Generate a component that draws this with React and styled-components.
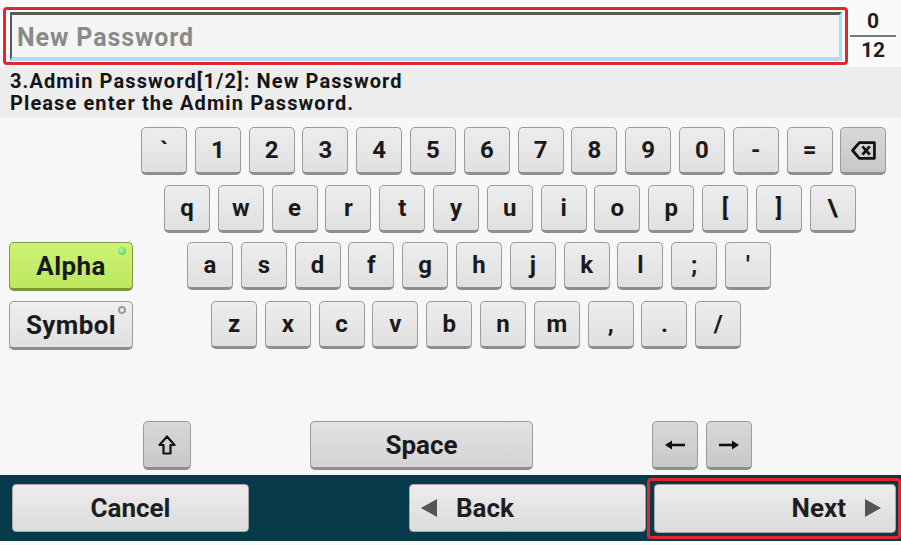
import React from 'react'
import styled, { createGlobalStyle } from 'styled-components'

const Global = createGlobalStyle`
  html, body { margin: 0; padding: 0; background: #fafafa; }
`

const rows = [
  { indent: 8, keys: ['`', '1', '2', '3', '4', '5', '6', '7', '8', '9', '0', '-', '=', 'BS'] },
  { indent: 31, keys: ['q', 'w', 'e', 'r', 't', 'y', 'u', 'i', 'o', 'p', '[', ']', '\\'] },
  { indent: 54, mode: 'Alpha', active: true, keys: ['a', 's', 'd', 'f', 'g', 'h', 'j', 'k', 'l', ';', "'"] },
  { indent: 78, mode: 'Symbol', keys: ['z', 'x', 'c', 'v', 'b', 'n', 'm', ',', '.', '/'] },
]

const BackspaceIcon = () => (
  <svg width="25" height="19" viewBox="0 0 24 18">
    <path d="M8 1.5 H22.5 V16.5 H8 L1.5 9 Z" fill="none" stroke="#111" strokeWidth="2.6" strokeLinejoin="round" />
    <path d="M11 5 L18 13 M18 5 L11 13" stroke="#111" strokeWidth="2.6" />
  </svg>
)

const ShiftIcon = () => (
  <svg width="18" height="20" viewBox="0 0 18 20">
    <path d="M9 1.5 L16.5 10 H12.5 V18.5 H5.5 V10 H1.5 Z" fill="none" stroke="#111" strokeWidth="2.2" strokeLinejoin="round" />
  </svg>
)

const ArrowIcon = ({ dir }) => (
  <svg width="22" height="10" viewBox="0 0 22 10" style={{ transform: dir === 'right' ? 'scaleX(-1)' : 'none' }}>
    <path d="M1 5 L8 0.5 V9.5 Z" fill="#111" />
    <path d="M6 5 H21" stroke="#111" strokeWidth="2.6" />
  </svg>
)

const Triangle = ({ dir }) => (
  <svg width="18" height="20" viewBox="0 0 18 20">
    {dir === 'left'
      ? <path d="M1 10 L17 1 V19 Z" fill="#555" />
      : <path d="M17 10 L1 1 V19 Z" fill="#555" />}
  </svg>
)

const App = () => {
  return (
    <>
      <Global />
      <Page>
        <Header>
          <FieldFrame>
            <Field>New Password</Field>
          </FieldFrame>
          <Counter>
            <span>0</span>
            <CounterLine />
            <span>12</span>
          </Counter>
        </Header>
        <Message>
          <div>3.Admin Password[1/2]: New Password</div>
          <div>Please enter the Admin Password.</div>
        </Message>
        <Keyboard>
          {rows.map((row, i) => (
            <KeyRow key={i}>
              <Side>
                {row.mode && (
                  <ModeButton $active={row.active}>
                    {row.mode}
                    <ModeDot $active={row.active} />
                  </ModeButton>
                )}
              </Side>
              <Keys $indent={row.indent}>
                {row.keys.map(k => (
                  <Key key={k} $dark={k === 'BS'}>
                    {k === 'BS' ? <BackspaceIcon /> : k}
                  </Key>
                ))}
              </Keys>
            </KeyRow>
          ))}
          <BottomKeys>
            <Key $dark><ShiftIcon /></Key>
            <SpaceKey>Space</SpaceKey>
            <ArrowKeys>
              <Key $dark><ArrowIcon dir="left" /></Key>
              <Key $dark><ArrowIcon dir="right" /></Key>
            </ArrowKeys>
          </BottomKeys>
        </Keyboard>
        <Bar>
          <BarButton $align="center">Cancel</BarButton>
          <Spacer />
          <BarButton $align="flex-start" $pad="0 0 0 10px">
            <Triangle dir="left" />
            <span>Back</span>
          </BarButton>
          <NextFrame>
            <BarButton $align="flex-end" $pad="0 13px 0 0" $full>
              <span>Next</span>
              <Triangle dir="right" />
            </BarButton>
          </NextFrame>
        </Bar>
        <BottomStrip />
      </Page>
    </>
  )
}

export default App

const Page = styled.div`
  width: 901px;
  height: 545px;
  display: flex;
  flex-direction: column;
  background: #f7f7f7;
  font-family: Roboto, "Liberation Sans", sans-serif;
  font-weight: 700;
  color: #1e1e1e;
  overflow: hidden;
`

const Header = styled.div`
  height: 67px;
  box-sizing: border-box;
  display: flex;
  align-items: flex-start;
  padding: 7px 5px 0 3px;
  gap: 2px;
  background: #fafafa;
`

const FieldFrame = styled.div`
  flex: 1;
  height: 58px;
  box-sizing: border-box;
  border: 3px solid #e2262b;
  border-radius: 4px;
  padding: 2px 3px 1px 4px;
`

const Field = styled.div`
  height: 100%;
  box-sizing: border-box;
  display: flex;
  align-items: center;
  padding: 3px 0 0 5px;
  background: #f5f5f5;
  border-top: 3px solid #595959;
  border-left: 2px solid #595959;
  border-right: 3px solid #acdff3;
  border-bottom: 4px solid #acdff3;
  font-size: 25px;
  letter-spacing: 0.9px;
  color: #8a8a8a;
`

const Counter = styled.div`
  width: 46px;
  display: flex;
  flex-direction: column;
  align-items: center;
  font-size: 21px;
  line-height: 22px;
  padding-top: 3px;
`

const CounterLine = styled.div`
  width: 46px;
  border-top: 2px solid #7a7a7a;
  margin: 3px 0 2px;
`

const Message = styled.div`
  height: 51px;
  box-sizing: border-box;
  background: #ededed;
  padding: 3px 10px 0;
  font-size: 20px;
  line-height: 22px;
  letter-spacing: 1.1px;
  color: #151515;
`

const Keyboard = styled.div`
  flex: 1;
  display: flex;
  flex-direction: column;
  gap: 9.7px;
  padding: 9px 0 5px;
  box-sizing: border-box;
`

const KeyRow = styled.div`
  display: flex;
  padding-left: 9px;
`

const Side = styled.div`
  width: 124px;
  flex-shrink: 0;
`

const Keys = styled.div`
  display: flex;
  gap: 7.8px;
  margin-left: ${p => p.$indent}px;
`

const Key = styled.button`
  width: 46px;
  height: 48px;
  padding: 0;
  box-sizing: border-box;
  display: flex;
  align-items: center;
  justify-content: center;
  font-family: inherit;
  font-weight: 700;
  font-size: 24px;
  color: #1a1a1a;
  background: ${p => (p.$dark ? 'linear-gradient(#d8d8d8, #c8c8c8)' : 'linear-gradient(#ededed, #e0e0e0)')};
  border: 1px solid #9c9c9c;
  border-bottom: 3px solid #8e8e8e;
  border-radius: 5px;
`

const ModeButton = styled.button`
  position: relative;
  width: 124px;
  height: 49px;
  box-sizing: border-box;
  display: flex;
  align-items: center;
  justify-content: center;
  font-family: inherit;
  font-weight: 700;
  font-size: 26px;
  letter-spacing: 0.4px;
  color: #1a1a1a;
  background: ${p => (p.$active ? 'linear-gradient(#cdf274, #bde85f)' : 'linear-gradient(#efefef, #e0e0e0)')};
  border: 1px solid ${p => (p.$active ? '#7f9c44' : '#9c9c9c')};
  border-bottom: 3px solid ${p => (p.$active ? '#7a9440' : '#8e8e8e')};
  border-radius: 5px;
`

const ModeDot = styled.span`
  position: absolute;
  top: 4px;
  right: 6px;
  width: 8px;
  height: 8px;
  box-sizing: border-box;
  border-radius: 50%;
  background: ${p => (p.$active ? 'radial-gradient(circle at 40% 40%, #b8f7b8, #3cc83c)' : 'transparent')};
  border: ${p => (p.$active ? 'none' : '2px solid #9a9a9a')};
`

const BottomKeys = styled.div`
  margin-top: auto;
  display: flex;
  align-items: center;
  padding-left: 143px;
  gap: 119px;
  & > button:first-child {
    width: 48px;
    height: 49px;
  }
`

const SpaceKey = styled(Key)`
  width: 223px;
  height: 49px;
  font-size: 26px;
  background: linear-gradient(#e2e2e2, #d4d4d4);
`

const ArrowKeys = styled.div`
  display: flex;
  gap: 8px;
  & > button {
    height: 49px;
  }
`

const Bar = styled.div`
  height: 66px;
  box-sizing: border-box;
  display: flex;
  align-items: center;
  padding-left: 12px;
  background: #073a4a;
`

const Spacer = styled.div`
  flex: 1;
`

const BarButton = styled.button`
  width: ${p => (p.$full ? '100%' : '237px')};
  height: ${p => (p.$full ? '100%' : '48px')};
  box-sizing: border-box;
  display: flex;
  align-items: center;
  justify-content: ${p => p.$align};
  gap: 18px;
  padding: ${p => p.$pad || '0'};
  font-family: inherit;
  font-weight: 700;
  font-size: 26px;
  color: #1e1e1e;
  background: linear-gradient(#ececec, #dcdcdc);
  border: 1px solid #a8a8a8;
  border-radius: 4px;
`

const NextFrame = styled.div`
  width: 254px;
  height: 61px;
  margin-left: 1px;
  box-sizing: border-box;
  border: 3px solid #e2262b;
  border-radius: 4px;
  padding: 3px 2px 3px 4px;
  display: flex;
`

const BottomStrip = styled.div`
  height: 4px;
  background: #fafafa;
`
